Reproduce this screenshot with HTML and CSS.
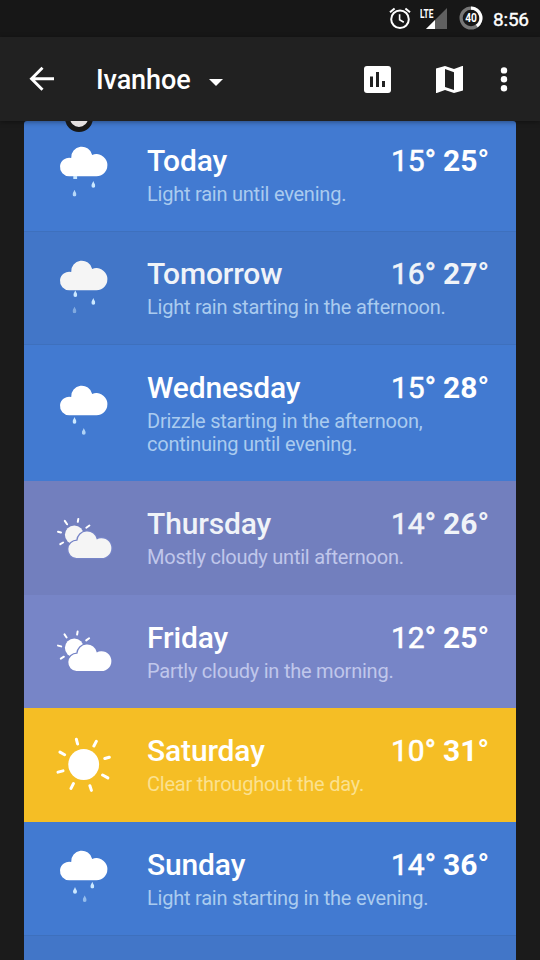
FILE: index.html
```html
<!DOCTYPE html>
<html lang="en">
<head>
    <meta charset="UTF-8">
    <meta name="viewport" content="width=device-width, initial-scale=1.0">
    <title>Ivanhoe</title>
    <link rel="stylesheet" href="styles.css">
</head>
<body>

    <!-- Shared shapes -->
    <svg class="defs" width="0" height="0">
        <symbol id="cloud" viewBox="0 0 72 72">
            <path d="M21.3 37.3A9.3 9.3 0 1 1 23.2 18.9A10.65 10.65 0 0 1 44.2 15.9A11.1 11.1 0 1 1 48.4 37.3Z"/>
        </symbol>
        <symbol id="drop" viewBox="0 0 4 7">
            <path d="M2 0C2.5 2 4 3 4 4.8A2 2 0 0 1 0 4.8C0 3 1.5 2 2 0Z"/>
        </symbol>
        <symbol id="partly" viewBox="0 0 72 72">
            <circle cx="26.3" cy="31.8" r="9.4"/>
            <path class="cutout" d="M28.5 55A8.6 8.6 0 1 1 29.4 37.8A9.8 9.8 0 0 1 48.8 36.4A9.9 9.9 0 1 1 53.1 55Z"/>
        </symbol>
    </svg>

    <div class="status-bar">
        <svg class="alarm" width="22" height="22" viewBox="0 0 22 22" fill="none" stroke="#fff">
            <circle cx="11" cy="12.2" r="8.8" stroke-width="2"/>
            <path d="M10.6 7.3V12.7L14.8 15.2" stroke-width="1.6"/>
            <path d="M1 5.2L5.6 1.4M16.4 1.4L21 5.2" stroke-width="2"/>
        </svg>
        <div class="signal">
            <span class="lte">LTE</span>
            <svg width="22" height="21" viewBox="0 0 22 21">
                <path d="M22 0V21H1Z" fill="#606060"/>
                <path d="M10 12V21H1Z" fill="#fff"/>
            </svg>
        </div>
        <div class="battery">
            <svg width="24" height="24" viewBox="0 0 24 24" fill="none" stroke-width="3.2">
                <circle cx="12" cy="12" r="9.9" stroke="#777"/>
                <path d="M12 2.1A9.9 9.9 0 0 1 17.8 20" stroke="#fff"/>
            </svg>
            <span class="battery-text">40</span>
        </div>
        <span class="clock">8:56</span>
    </div>

    <div class="toolbar">
        <svg class="back" width="26" height="26" viewBox="0 0 26 26" fill="none" stroke="#fff" stroke-width="2.9">
            <path d="M13.5 1.8L2.5 12.8L13.5 23.8M2.5 12.8H25"/>
        </svg>
        <span class="city">Ivanhoe</span>
        <svg class="caret" width="14" height="7" viewBox="0 0 14 7"><path d="M0 0H14L7 7Z" fill="#fff"/></svg>
        <svg class="chart" width="27" height="27" viewBox="0 0 27 27">
            <rect width="27" height="27" rx="3" fill="#fff"/>
            <path d="M6 10.5H9V21H6ZM12 6H15V21H12ZM18 15H21V21H18Z" fill="#212121"/>
        </svg>
        <svg class="map" width="27" height="27" viewBox="0 0 27 27">
            <path d="M0 2.6L9 0L18 3L26.2 0H27V24.4L18 27L9 24L.8 27H0Z" fill="#fff"/>
            <path d="M9 3L18 6.2V24L9 20.9Z" fill="#212121"/>
        </svg>
        <svg class="more" width="8" height="25" viewBox="0 0 8 25" fill="#fff">
            <circle cx="4" cy="3.4" r="3.2"/>
            <circle cx="4" cy="12.3" r="3.2"/>
            <circle cx="4" cy="21.3" r="3.2"/>
        </svg>
    </div>

    <div class="forecast">
        <span class="marker"></span>
        <div class="day rain">
            <svg class="icon" viewBox="0 0 72 72">
                <use href="#cloud" width="72" height="72"/>
                <g class="drops">
                    <rect x="25.3" y="37" width="3.8" height="3"/>
                    <use href="#drop" x="43.3" y="42" width="4" height="7"/>
                    <use href="#drop" x="24.5" y="50.7" width="4" height="7" opacity=".85"/>
                </g>
            </svg>
            <div class="info">
                <div class="name">Today</div>
                <div class="desc">Light rain until evening.</div>
            </div>
            <div class="temps"><span class="low">15°</span><span class="high">25°</span></div>
        </div>
        <div class="day rain alt">
            <svg class="icon" viewBox="0 0 72 72">
                <use href="#cloud" width="72" height="72"/>
                <g class="drops">
                    <use href="#drop" x="25.3" y="37.2" width="4" height="7"/>
                    <use href="#drop" x="43.3" y="45" width="4" height="7"/>
                    <use href="#drop" x="24.5" y="53.5" width="4" height="7" opacity=".45"/>
                </g>
            </svg>
            <div class="info">
                <div class="name">Tomorrow</div>
                <div class="desc">Light rain starting in the afternoon.</div>
            </div>
            <div class="temps"><span class="low">16°</span><span class="high">27°</span></div>
        </div>
        <div class="day rain">
            <svg class="icon" viewBox="0 0 72 72">
                <use href="#cloud" width="72" height="72"/>
                <g class="drops">
                    <use href="#drop" x="24.5" y="39" width="4" height="7"/>
                    <use href="#drop" x="33.8" y="50" width="4" height="7" opacity=".8"/>
                </g>
            </svg>
            <div class="info">
                <div class="name">Wednesday</div>
                <div class="desc">Drizzle starting in the afternoon,<br>continuing until evening.</div>
            </div>
            <div class="temps"><span class="low">15°</span><span class="high">28°</span></div>
        </div>
        <div class="day cloudy alt">
            <svg class="icon" viewBox="0 0 72 72">
                <use href="#partly" width="72" height="72"/>
                <path class="rays thin" d="M16.8 17.9L19.1 21.3M30.3 15.9L29.8 18.8M41.4 22.5L38.3 24.7M10 28.8L13 29.5M12.3 41.2L15.1 39.5"/>
            </svg>
            <div class="info">
                <div class="name">Thursday</div>
                <div class="desc">Mostly cloudy until afternoon.</div>
            </div>
            <div class="temps"><span class="low">14°</span><span class="high">26°</span></div>
        </div>
        <div class="day cloudy">
            <svg class="icon" viewBox="0 0 72 72">
                <use href="#partly" width="72" height="72"/>
                <path class="rays thin" d="M16.5 18.4L18.6 21.5M29.6 15.6L29.1 18.6M41.1 22.3L38.2 24.4M10 29.6L13.2 30.4M12.8 42.6L15.9 40.7"/>
            </svg>
            <div class="info">
                <div class="name">Friday</div>
                <div class="desc">Partly cloudy in the morning.</div>
            </div>
            <div class="temps"><span class="low">12°</span><span class="high">25°</span></div>
        </div>
        <div class="day clear">
            <svg class="icon" viewBox="0 0 72 72">
                <circle cx="35.7" cy="34.5" r="15.4"/>
                <path class="rays" d="M28.4 9.3L29.6 14M48.3 11.4L45.9 16M61.3 27.2L56.8 28.5M59.8 47.9L54.6 45M43.4 60.4L41.9 55.8M23 58.4L25.4 53.6M10 42.1L15 40.9M12 22.1L16.6 24.7"/>
            </svg>
            <div class="info">
                <div class="name">Saturday</div>
                <div class="desc">Clear throughout the day.</div>
            </div>
            <div class="temps"><span class="low">10°</span><span class="high">31°</span></div>
        </div>
        <div class="day rain">
            <svg class="icon" viewBox="0 0 72 72">
                <use href="#cloud" width="72" height="72"/>
                <g class="drops">
                    <use href="#drop" x="25" y="44" width="4" height="7"/>
                    <use href="#drop" x="42.3" y="38.7" width="4" height="7"/>
                    <use href="#drop" x="34.7" y="52.2" width="4" height="7" opacity=".6"/>
                </g>
            </svg>
            <div class="info">
                <div class="name">Sunday</div>
                <div class="desc">Light rain starting in the evening.</div>
            </div>
            <div class="temps"><span class="low">14°</span><span class="high">36°</span></div>
        </div>
        <div class="day rain alt"></div>
    </div>

</body>
</html>
```
FILE: styles.css
```css
* {
    box-sizing: border-box;
}
body {
    margin: 0;
    width: 540px;
    height: 960px;
    overflow: hidden;
    font-family: Roboto, "Liberation Sans", sans-serif;
    background-color: #1b1b1b;
    color: white;
}
svg {
    display: block;
    flex: none;
}
.defs {
    position: absolute;
}
.status-bar {
    display: flex;
    align-items: flex-start;
    height: 37px;
    padding: 7px 0 0 389px;
    background-color: #171717;
}
.signal {
    position: relative;
    width: 27px;
    margin-left: 9px;
    padding: 1px 0 0 5px;
}
.lte {
    position: absolute;
    left: 0;
    top: 0;
    font-size: 13px;
    line-height: 13px;
    font-weight: 700;
    transform: scaleX(0.64);
    transform-origin: left;
}
.battery {
    position: relative;
    margin: -1px 0 0 12px;
}
.battery-text {
    position: absolute;
    left: 0;
    top: 0;
    width: 24px;
    font-size: 12px;
    line-height: 24px;
    font-weight: 700;
    text-align: center;
    transform: scaleX(0.85);
}
.clock {
    margin-left: 10px;
    font-size: 19px;
    line-height: 25px;
    letter-spacing: -0.2px;
    -webkit-text-stroke: 0.4px;
}
.toolbar {
    position: relative;
    z-index: 1;
    display: flex;
    align-items: center;
    height: 84px;
    padding-left: 29px;
    background-color: #212121;
    box-shadow: 0 1px 5px rgba(0, 0, 0, 0.4);
}
.city {
    width: 95px;
    margin: 2px 18px 0 41px;
    font-size: 27px;
    line-height: 32px;
    font-weight: 500;
    letter-spacing: -0.1px;
}
.caret {
    margin-top: 6px;
}
.chart {
    margin-left: 141px;
}
.map {
    margin-left: 45px;
}
.more {
    margin-left: 37px;
}
.forecast {
    position: relative;
    width: 492px;
    height: 839px;
    margin: 0 24px;
    border-radius: 3px 3px 0 0;
    overflow: hidden;
}
.marker {
    position: absolute;
    z-index: 1;
    left: 41px;
    top: -17.5px;
    width: 28px;
    height: 28px;
    border: 5px solid #181818;
    border-radius: 50%;
    background-color: #e4e0e0;
}
.day {
    display: flex;
    min-height: 113.5px;
    padding: 0 27px 0 24px;
}
/* the list is scrolled a little under the toolbar */
.marker + .day {
    margin-top: -3.5px;
}
.rain {
    background-color: #427ad1;
}
.rain.alt {
    background-color: #4276c8;
    box-shadow: inset 0 1px 0 rgba(0, 0, 0, 0.05), inset 0 -1px 0 rgba(0, 0, 0, 0.05);
}
.cloudy {
    background-color: #7785c7;
}
.cloudy.alt {
    background-color: #727fbe;
}
.clear {
    background-color: #f5be25;
}
.icon {
    width: 72px;
    height: 72px;
    align-self: center;
    margin-top: 2px;
    fill: white;
}
.alt .icon {
    fill: #f5f5f5;
}
.drops {
    fill: #cbe8ff;
}
.rays {
    stroke: white;
    stroke-width: 3;
    stroke-linecap: round;
}
.thin {
    stroke-width: 2;
}
.cutout {
    stroke: #7785c7;
    stroke-width: 2.6;
    paint-order: stroke;
}
.info {
    flex: 1;
    padding: 25px 0 25.5px 27px;
    white-space: nowrap;
}
.name {
    font-size: 30px;
    line-height: 36px;
    font-weight: 500;
    letter-spacing: -0.15px;
}
.desc {
    margin-top: 4px;
    font-size: 20px;
    line-height: 23px;
    letter-spacing: -0.23px;
    color: #aacbef;
}
.cloudy .desc {
    color: #c0c7eb;
}
.clear .desc {
    color: #fbe18f;
}
.temps {
    display: flex;
    gap: 8px;
    width: 98px;
    margin-left: -98px;
    padding-top: 25px;
    font-size: 30px;
    line-height: 36px;
}
.low {
    width: 44px;
    -webkit-text-stroke: 0.6px;
}
.high {
    font-weight: 700;
}
.alt .name,
.alt .temps {
    color: #f0f3f8;
}
```
